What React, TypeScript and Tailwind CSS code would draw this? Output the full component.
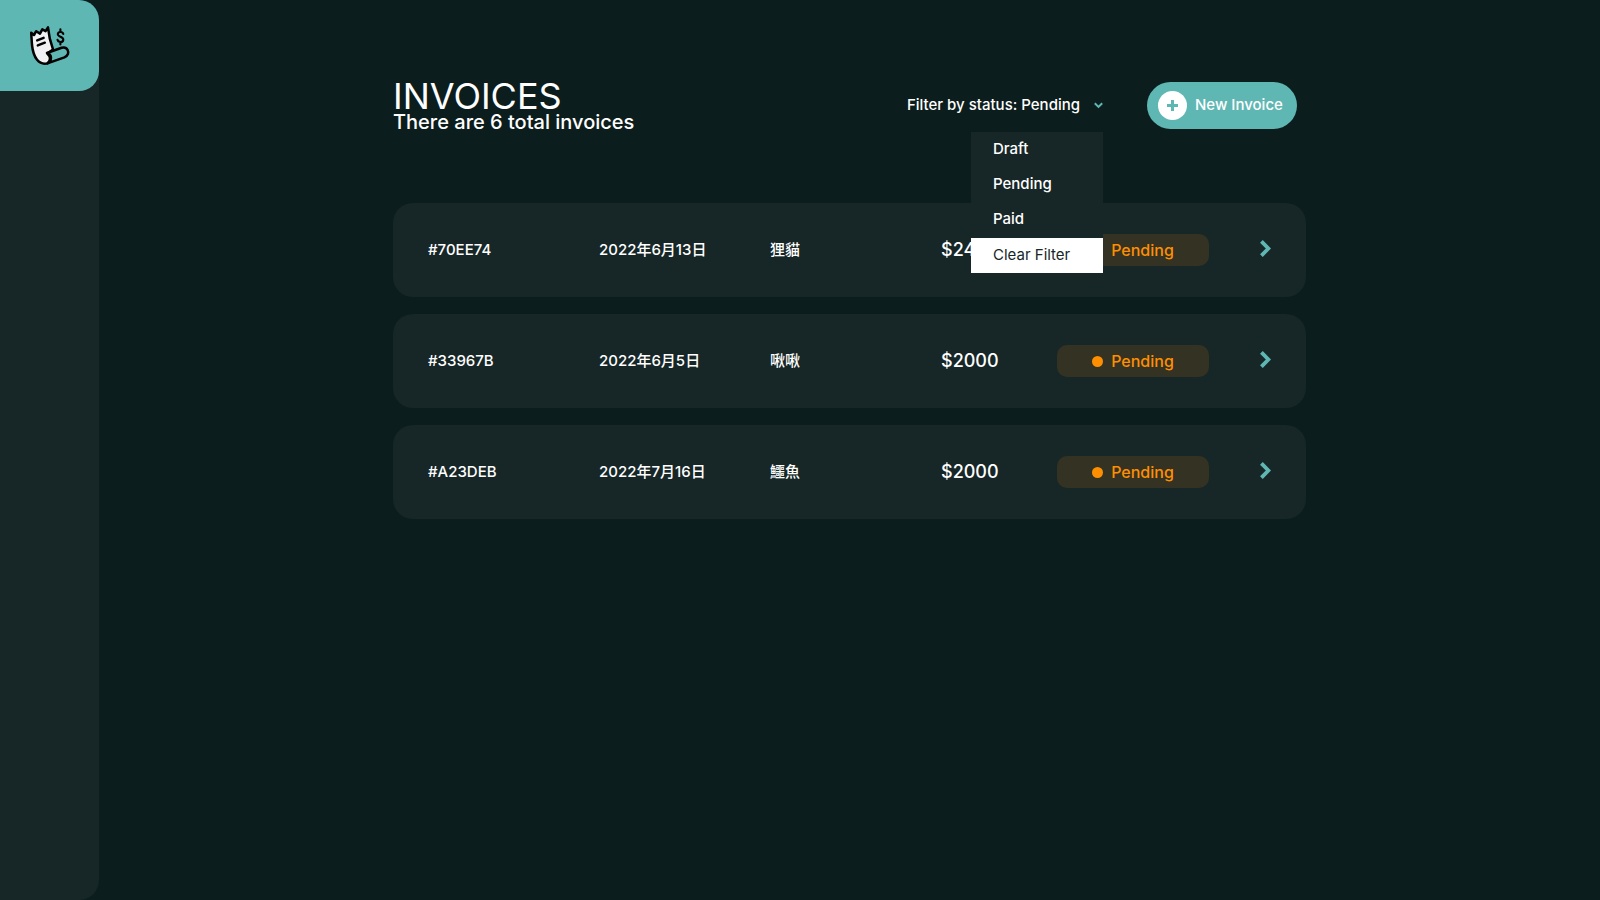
import { useState } from 'react'

type Invoice = { id: string; date: string; client: string; total: string }

const invoices: Invoice[] = [
  { id: '#70EE74', date: '2022年6月13日', client: '狸貓', total: '$2400' },
  { id: '#33967B', date: '2022年6月5日', client: '啾啾', total: '$2000' },
  { id: '#A23DEB', date: '2022年7月16日', client: '鱷魚', total: '$2000' },
]

const statuses = ['Draft', 'Pending', 'Paid']

function Logo() {
  return (
    <svg viewBox="0 0 60 60" className="size-[60px]" fill="none" stroke="#000" strokeWidth="2.5" strokeLinecap="round" strokeLinejoin="round" aria-hidden="true">
      <path d="M11.2 16.8 14 19 16.2 15.2 20 17.6 22.3 13.4 25.6 15.2 28 11.4C28.6 18 30 25 33 33.4L27.4 37.6C31 41 30.6 45 27.4 47.4C19 49.4 13.4 42 12 29Z" fill="#f1f1f3" />
      <path d="M27.4 47.4 44.4 41.4C48.2 39.6 49 36.8 47.6 34C46.4 31.6 43.6 31.2 41.6 31.8L27 37C31.6 38.4 32.8 44 27.4 47.4Z" fill="#5fb7b4" />
      <path d="M17.2 24.4 23.6 21.9M17.8 29.4 24.8 26.7" />
      <path d="M40.4 13.2V15.4M40.4 26.2V28.4M43.3 18C42.6 15.4 38.2 15.2 37.8 18C37.4 21 43.4 20.4 43.3 23.6C43.2 26.8 38.2 26.6 37.5 23.8" strokeWidth="2.1" />
    </svg>
  )
}

function InvoiceRow({ invoice }: { invoice: Invoice }) {
  return (
    <li>
      <a
        href={invoice.id}
        className="grid h-[94px] grid-cols-[171fr_171fr_171fr_116fr_152fr_62fr] items-center rounded-[20px] bg-[#172727] px-[35px] text-[15px] font-medium"
      >
        <span>{invoice.id}</span>
        <span>{invoice.date}</span>
        <span>{invoice.client}</span>
        <span className="text-lg">{invoice.total}</span>
        <span className="flex h-8 items-center justify-center gap-2 rounded-[10px] bg-[#343223] text-base text-[#ff8f00]">
          <span className="size-[11px] rounded-full bg-[#ff8f00]" />
          Pending
        </span>
        <svg viewBox="0 0 11 17" className="mb-1 h-[17px] w-[11px] justify-self-end" fill="none" stroke="#5fb7b4" strokeWidth="3.8" aria-hidden="true">
          <path d="M1.4 1.4 8.4 8.5 1.4 15.6" />
        </svg>
      </a>
    </li>
  )
}

export default function App() {
  const [open, setOpen] = useState(true)
  const [status, setStatus] = useState('Pending')

  const choose = (value: string) => {
    setStatus(value)
    setOpen(false)
  }

  return (
    <div className="flex min-h-screen bg-[#0c1d1d] font-['Inter','Noto_Sans_CJK_TC',sans-serif] text-white">
      <aside className="w-[99px] shrink-0 rounded-r-[20px] bg-[#172727]">
        <a href="#home" aria-label="Home" className="flex h-[91px] items-center justify-center rounded-r-[20px] bg-[#5fb7b4]">
          <Logo />
        </a>
      </aside>

      <main className="grow">
        <div className="mx-auto max-w-[913px] pt-[82px]">
          <header className="flex h-[47px] items-start pr-[9px]">
            <div>
              <h1 className="text-4xl leading-7">INVOICES</h1>
              <p className="text-xl leading-6 font-medium">There are 6 total invoices</p>
            </div>

            <div className="relative ml-auto">
              <button
                type="button"
                aria-haspopup="menu"
                aria-expanded={open}
                onClick={() => setOpen(!open)}
                className="flex h-[47px] items-center gap-[14px] text-[15px] font-medium"
              >
                Filter by status: {status}
                <svg viewBox="0 0 9 7" className="h-[7px] w-[9px]" fill="none" stroke="#5fb7b4" strokeWidth="2" aria-hidden="true">
                  <path d="M0.8 1.2 4.5 4.9 8.2 1.2" />
                </svg>
              </button>
              {open && (
                <div role="menu" className="absolute top-[50px] right-0 w-[132px] bg-[#172727] text-[15px] font-medium">
                  {statuses.map((item) => (
                    <button key={item} type="button" role="menuitem" onClick={() => choose(item)} className="block h-[35px] w-full px-[22px] text-left">
                      {item}
                    </button>
                  ))}
                  <button type="button" role="menuitem" onClick={() => choose('')} className="mt-px block h-[35px] w-full bg-white px-[22px] text-left font-normal text-[#172727]">
                    Clear Filter
                  </button>
                </div>
              )}
            </div>

            <button type="button" className="ml-11 flex h-[47px] w-[150px] items-center gap-2 rounded-full bg-[#5fb7b4] pl-[11px] text-[15px] font-medium whitespace-nowrap">
              <span className="flex size-[29px] items-center justify-center rounded-full bg-white">
                <svg viewBox="0 0 11 11" className="size-[11px]" fill="none" stroke="#5fb7b4" strokeWidth="3" aria-hidden="true">
                  <path d="M5.5 0V11M0 5.5H11" />
                </svg>
              </span>
              New Invoice
            </button>
          </header>

          <ul className="mt-[74px] flex flex-col gap-[17px]">
            {invoices.map((invoice) => (
              <InvoiceRow key={invoice.id} invoice={invoice} />
            ))}
          </ul>
        </div>
      </main>
    </div>
  )
}
